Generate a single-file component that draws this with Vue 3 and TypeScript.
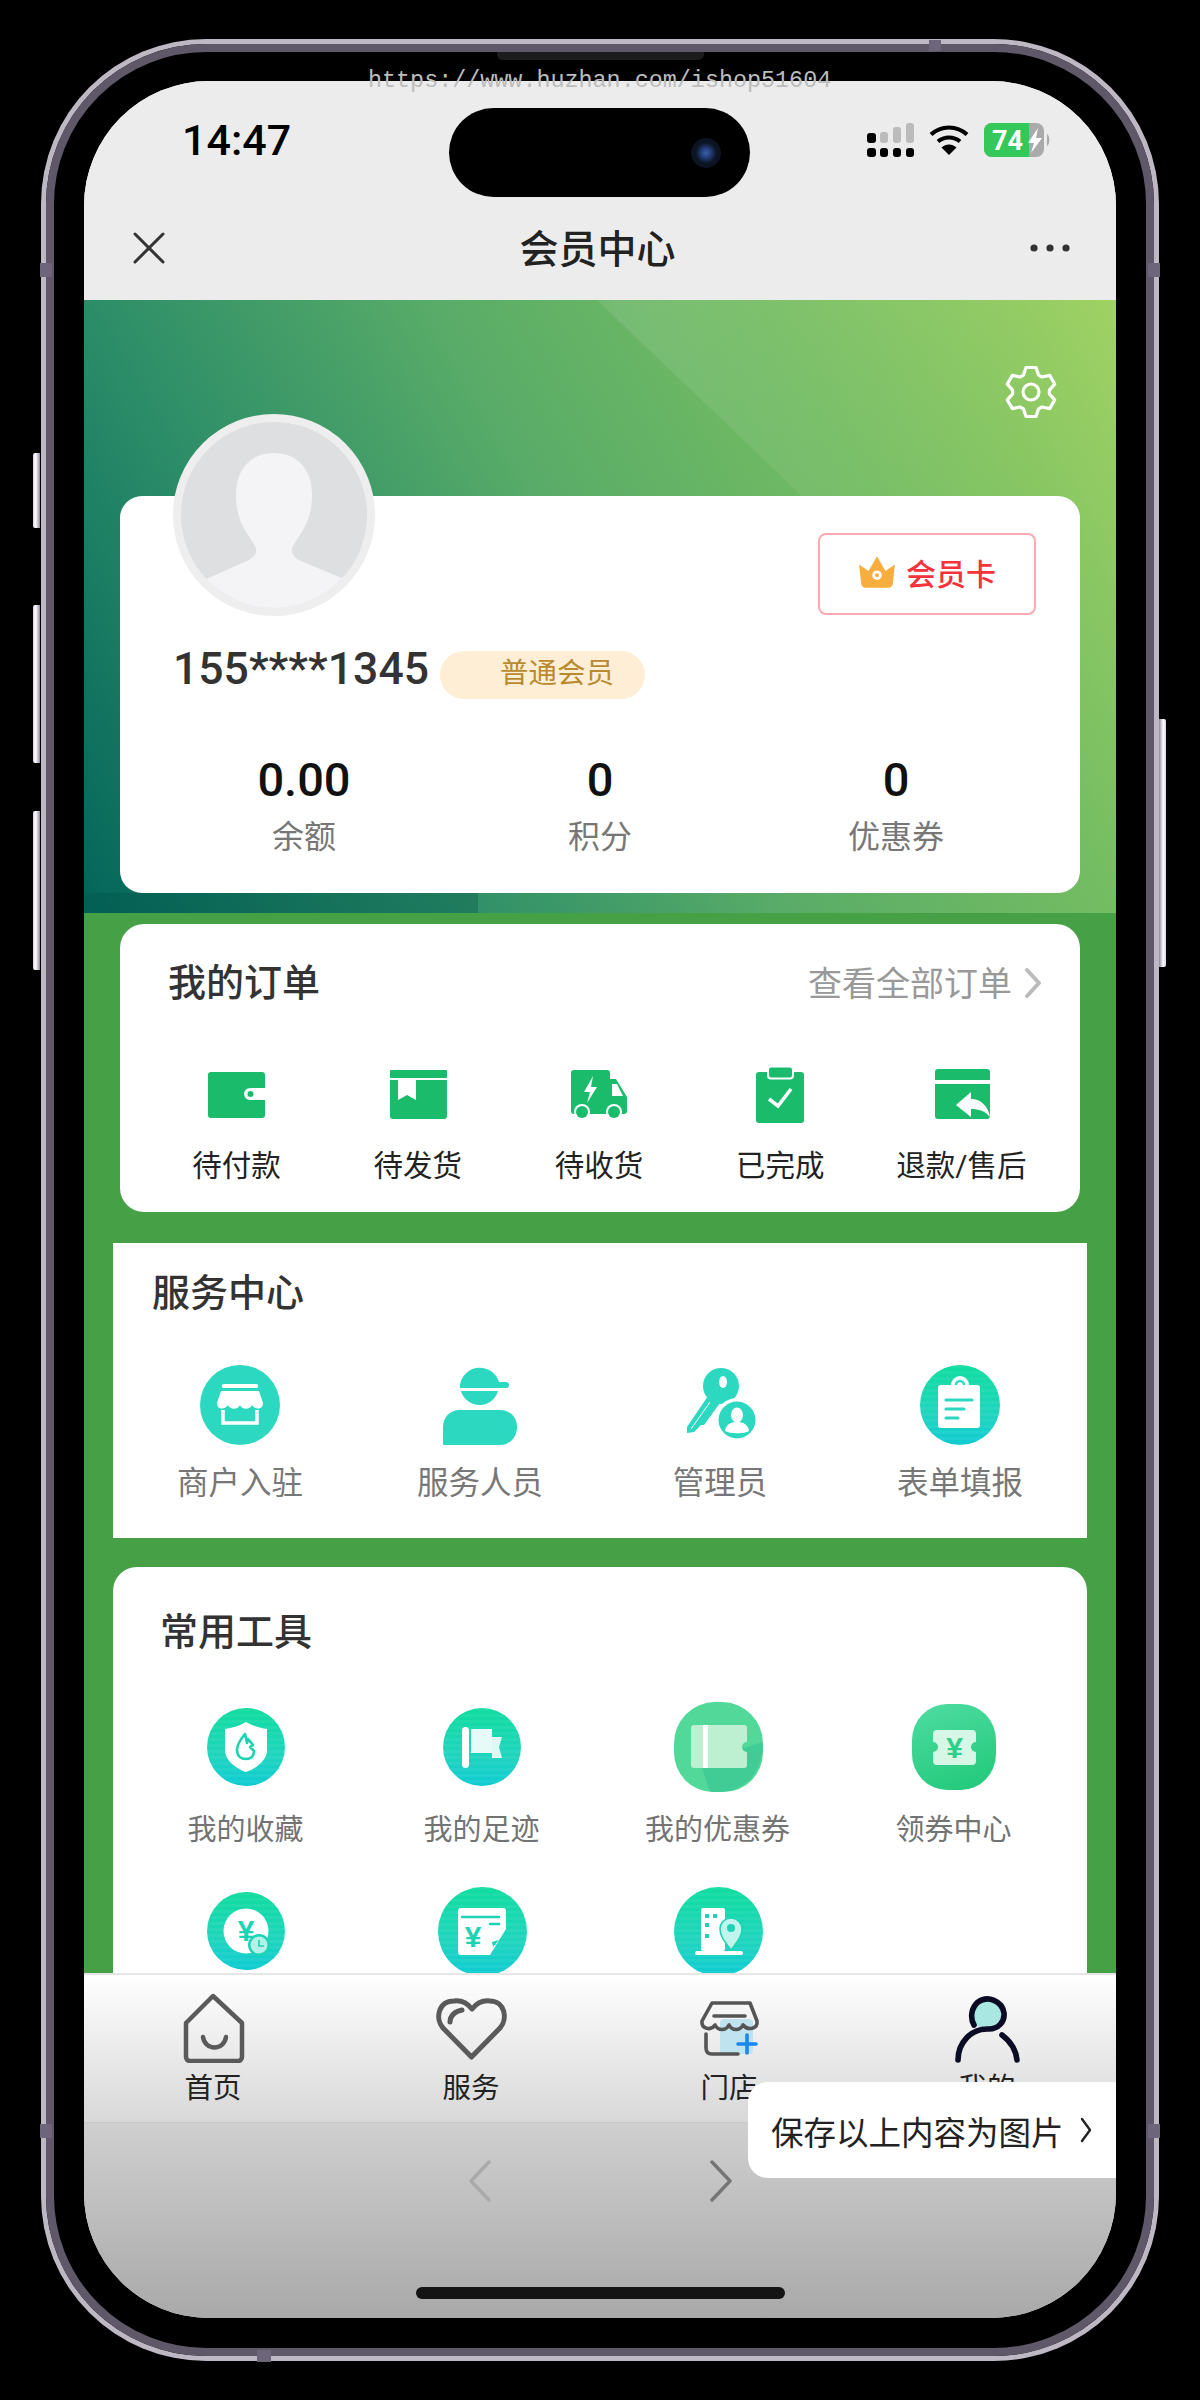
<template>
  <div class="page">
    <i class="side side-a"></i>
    <i class="side side-b"></i>
    <i class="side side-c"></i>
    <i class="side side-d"></i>
    <i class="seam seam-top"></i>
    <i class="seam seam-bottom"></i>
    <i class="seam seam-l1"></i>
    <i class="seam seam-r1"></i>
    <i class="seam seam-l2"></i>
    <i class="seam seam-r2"></i>

    <div class="phone">
      <i class="speaker"></i>
      <div class="screen">
        <header class="top">
          <div class="island"><i class="camera"></i></div>
          <div class="status">
            <span class="time">14:47</span>
            <div class="status-icons">
              <svg width="47" height="34" viewBox="0 0 47 34">
                <rect x="0" y="10" width="9" height="10" rx="3" fill="#000" />
                <rect x="13" y="9" width="8" height="11" rx="3" fill="#bbb" />
                <rect x="26" y="4" width="8" height="16" rx="3" fill="#bbb" />
                <rect x="39" y="0" width="8" height="20" rx="3" fill="#bbb" />
                <rect x="0" y="25" width="9" height="9" rx="3" fill="#000" />
                <rect x="13" y="25" width="8" height="9" rx="3" fill="#000" />
                <rect x="26" y="25" width="8" height="9" rx="3" fill="#000" />
                <rect x="39" y="25" width="8" height="9" rx="3" fill="#000" />
              </svg>
              <svg width="40" height="30" viewBox="0 0 40 30" fill="none" stroke="#000" stroke-width="4">
                <path d="M2 9.5C12 0 28 0 38 9.5" />
                <path d="M9 16.5C15 11 25 11 31 16.5" />
                <path d="M20 30L12.5 22.5C17 18.5 23 18.5 27.5 22.5Z" fill="#000" stroke="none" />
              </svg>
              <svg width="67" height="34" viewBox="0 0 67 34">
                <rect x="0" y="0" width="60" height="34" rx="8" fill="#aaa" />
                <path d="M8 0H45V34H8A8 8 0 0 1 0 26V8A8 8 0 0 1 8 0Z" fill="#34c759" />
                <path d="M63 11C66 12 66 22 63 23Z" fill="#aaa" />
                <text x="8" y="27" class="batt">74</text>
                <path d="M54 5L44 20H50L47 30L58 15H52Z" fill="#fff" />
              </svg>
            </div>
          </div>
          <nav class="navbar">
            <svg width="32" height="32" viewBox="0 0 32 32" stroke="#333" stroke-width="3" stroke-linecap="round">
              <path d="M2 2L30 30M30 2L2 30" />
            </svg>
            <span class="nav-title">会员中心</span>
            <svg width="40" height="8" viewBox="0 0 40 8" fill="#333">
              <circle cx="4" cy="4" r="3.6" /><circle cx="20" cy="4" r="3.6" /><circle cx="36" cy="4" r="3.6" />
            </svg>
          </nav>
        </header>

        <main class="main">
          <section class="hero">
            <svg class="gear" width="54" height="54" viewBox="0 0 54 54" fill="none" stroke="#fff" stroke-width="3.2" stroke-linejoin="round">
              <path :d="gearPath" />
              <circle cx="27" cy="27" r="8" />
            </svg>
            <div class="profile">
              <div class="profile-top">
                <div class="avatar">
                  <svg width="186" height="186" viewBox="0 0 186 186">
                    <path d="M55 72C55 45 72 31 93 31C114 31 131 45 131 72C131 98 122 108 113 122C108 130 112 135 120 139L163 157V190H25V157L66 139C74 135 78 130 73 122C64 108 55 98 55 72Z" fill="#f4f4f7" />
                  </svg>
                </div>
                <div class="vip-btn">
                  <svg width="38" height="32" viewBox="0 0 36 30">
                    <path d="M1 8L10 14L18 0L26 14L35 8L33 26C33 28 31 30 29 30H7C5 30 3 28 3 26Z" fill="#f8ae3e" />
                    <circle cx="18" cy="18" r="4.5" fill="#fff" />
                    <circle cx="18" cy="18" r="1.8" fill="#f8ae3e" />
                  </svg>
                  <span>会员卡</span>
                </div>
              </div>
              <div class="name-row">
                <span class="phone-no">155****1345</span>
                <span class="level">普通会员</span>
              </div>
              <div class="stats">
                <div v-for="s in stats" :key="s.label" class="stat">
                  <b>{{ s.value }}</b>
                  <span>{{ s.label }}</span>
                </div>
              </div>
            </div>
          </section>

          <section class="orders">
            <div class="orders-head">
              <h3>我的订单</h3>
              <div class="all">
                <span>查看全部订单</span>
                <svg width="18" height="32" viewBox="0 0 18 32" fill="none" stroke="#bbb" stroke-width="4" stroke-linecap="round" stroke-linejoin="round">
                  <path d="M3 3L15 16L3 29" />
                </svg>
              </div>
            </div>
            <div class="orders-grid">
              <div class="order">
                <svg width="60" height="60" viewBox="0 0 60 60" fill="#1abc6c">
                  <path d="M4 7H55A3 3 0 0 1 58 10V23H43A6 6 0 0 0 43 35H58V50A3 3 0 0 1 55 53H4A3 3 0 0 1 1 50V10A3 3 0 0 1 4 7Z" />
                  <circle cx="43.5" cy="29" r="3" />
                </svg>
                <span>待付款</span>
              </div>
              <div class="order">
                <svg width="60" height="60" viewBox="0 0 60 60" fill="#1abc6c">
                  <rect x="2" y="5" width="57" height="8" rx="1" />
                  <path d="M2 15H10V35L19 30L28 35V15H59V51A3 3 0 0 1 56 54H5A3 3 0 0 1 2 51Z" />
                </svg>
                <span>待发货</span>
              </div>
              <div class="order">
                <svg width="60" height="60" viewBox="0 0 60 60" fill="#1abc6c">
                  <path d="M5 5H38A3 3 0 0 1 41 8V14H47L58 32V46C58 48 57 49 55 49H5C3 49 2 48 2 46V8A3 3 0 0 1 5 5Z" />
                  <path d="M43 19H48L54 31H43Z" fill="#fff" />
                  <path d="M24 11L15 27H21L18 38L28 22H22Z" fill="#fff" />
                  <circle cx="13" cy="47" r="8" fill="#fff" /><circle cx="13" cy="47" r="6" />
                  <circle cx="45" cy="47" r="8" fill="#fff" /><circle cx="45" cy="47" r="6" />
                </svg>
                <span>待收货</span>
              </div>
              <div class="order">
                <svg width="60" height="60" viewBox="0 0 60 60" fill="#1abc6c">
                  <path d="M9 7H51A3 3 0 0 1 54 10V55A3 3 0 0 1 51 58H9A3 3 0 0 1 6 55V10A3 3 0 0 1 9 7Z" />
                  <rect x="18" y="1.5" width="25" height="12" rx="3" stroke="#fff" stroke-width="2" />
                  <path d="M19 34L28 41L41 24" fill="none" stroke="#fff" stroke-width="3.5" />
                </svg>
                <span>已完成</span>
              </div>
              <div class="order">
                <svg width="60" height="60" viewBox="0 0 60 60" fill="#1abc6c">
                  <path d="M7 4H56A3 3 0 0 1 59 7V15H4V7A3 3 0 0 1 7 4Z" />
                  <path d="M4 19H59V51A3 3 0 0 1 56 54H7A3 3 0 0 1 4 51Z" />
                  <path d="M25 40L40 27V34C50 34 57 41 59 52C54 46 48 44 40 44V52Z" fill="#fff" />
                </svg>
                <span>退款/售后</span>
              </div>
            </div>
          </section>

          <section class="service">
            <h3>服务中心</h3>
            <div class="service-grid">
              <div class="cell">
                <svg width="80" height="80" viewBox="0 0 80 80">
                  <circle cx="40" cy="40" r="40" fill="#2dd8c0" />
                  <rect x="22" y="19" width="36" height="4" rx="1.5" fill="#fff" />
                  <path d="M21 26H59L63 38C63 45 55 45 52 40C50 45 42 45 40 40C38 45 30 45 28 40C25 45 17 45 17 38Z" fill="#fff" />
                  <path d="M23 45V58H57V45" fill="none" stroke="#fff" stroke-width="3.5" />
                </svg>
                <span>商户入驻</span>
              </div>
              <div class="cell">
                <svg width="80" height="80" viewBox="0 0 80 80" fill="#2dd8c0">
                  <path d="M20 23V20A20 20 0 0 1 59 17H66A3 3 0 0 1 66 23Z" />
                  <path d="M21 26H58C56 34 48 40 40 40C31 40 23 34 21 26Z" />
                  <path d="M20 45H60C70 45 77 52 77 62C77 72 70 80 60 80H3V62C3 52 10 45 20 45Z" />
                </svg>
                <span>服务人员</span>
              </div>
              <div class="cell">
                <svg width="80" height="80" viewBox="0 0 80 80" fill="#2dd8c0">
                  <circle cx="41" cy="21" r="18" />
                  <path d="M28 31L7 62V68L14 67L21 60H24L40 38Z" />
                  <ellipse cx="43" cy="17" rx="4" ry="6" fill="#fff" />
                  <path d="M11 64L30 37" stroke="#fff" stroke-width="1" />
                  <circle cx="57" cy="55" r="22" fill="#fff" />
                  <circle cx="57" cy="55" r="18.5" />
                  <ellipse cx="57" cy="50" rx="6" ry="7.5" fill="#fff" />
                  <path d="M45 66C46 59 51 57 57 57C63 57 68 59 69 66C65 69 50 69 45 66Z" fill="#fff" />
                </svg>
                <span>管理员</span>
              </div>
              <div class="cell">
                <div class="disc grad d80">
                  <svg width="80" height="80" viewBox="0 0 80 80">
                    <path d="M21 20H31A9 9 0 0 1 49 20H57A3 3 0 0 1 60 23V60A3 3 0 0 1 57 63H21A3 3 0 0 1 18 60V23A3 3 0 0 1 21 20Z" fill="#fff" />
                    <path d="M36 20A4 4 0 0 1 44 20" fill="none" stroke="#2dd8c0" stroke-width="2.5" />
                    <path d="M26 35H52M26 44H44M26 53H38" stroke="#2dd8c0" stroke-width="3.2" stroke-linecap="round" />
                  </svg>
                </div>
                <span>表单填报</span>
              </div>
            </div>
          </section>

          <section class="tools">
            <h3>常用工具</h3>
            <div class="tools-grid">
              <div class="tool">
                <div class="slot">
                  <div class="disc grad d78">
                    <svg width="78" height="78" viewBox="0 0 78 78">
                      <path d="M39 14C32 18 25 20 18 21V42C18 53 30 61 39 64C48 61 60 53 60 42V21C53 20 46 18 39 14Z" fill="#fff" />
                      <path d="M38 26C33 32 30 37 30 42C30 48 34 51 39 51C44 51 47 48 47 43L43 39L46 37L41 31L40 35Z" fill="none" stroke="#18d4b0" stroke-width="2.6" stroke-linejoin="round" />
                    </svg>
                  </div>
                </div>
                <span>我的收藏</span>
              </div>
              <div class="tool">
                <div class="slot">
                  <div class="disc grad d78">
                    <svg width="78" height="78" viewBox="0 0 78 78" fill="#fff">
                      <rect x="19" y="19" width="7" height="41" rx="3.5" />
                      <rect x="28" y="21" width="21" height="24" fill="#e6fbf8" />
                      <path d="M49 29H59L56 39L59 50H49Z" fill="#dff8f5" />
                    </svg>
                  </div>
                </div>
                <span>我的足迹</span>
              </div>
              <div class="tool">
                <div class="slot">
                  <div class="squircle coupon">
                    <svg width="89" height="90" viewBox="0 0 89 90">
                      <path d="M89 40C89 70 72 90 44 90H36L26 60L73 45Z" fill="#3cc894" opacity=".7" />
                      <path d="M20 23H70A3 3 0 0 1 73 26V40A5 5 0 0 0 73 50V63A3 3 0 0 1 70 66H20A3 3 0 0 1 17 63V26A3 3 0 0 1 20 23Z" fill="#bdf0d0" />
                      <rect x="29" y="23" width="5" height="43" fill="#fff" />
                    </svg>
                  </div>
                </div>
                <span>我的优惠券</span>
              </div>
              <div class="tool">
                <div class="slot">
                  <div class="squircle ticket">
                    <svg width="84" height="86" viewBox="0 0 84 86">
                      <path d="M25 26H60A4 4 0 0 1 64 30V38A5 5 0 0 0 64 48V57A4 4 0 0 1 60 61H25A4 4 0 0 1 21 57V48A5 5 0 0 0 21 38V30A4 4 0 0 1 25 26Z" fill="#d6f6e6" />
                      <text x="42.5" y="54" class="yen" fill="#2ecf8a">¥</text>
                    </svg>
                  </div>
                </div>
                <span>领券中心</span>
              </div>
              <div class="tool">
                <div class="slot">
                  <div class="disc grad d78">
                    <svg width="78" height="78" viewBox="0 0 78 78">
                      <circle cx="39" cy="39" r="22.5" fill="#fff" />
                      <text x="39" y="49" class="yen" fill="#1cd4b4">¥</text>
                      <circle cx="52" cy="53" r="11" fill="#1cd4b4" />
                      <circle cx="52" cy="53" r="8.5" fill="#b4f1e8" />
                      <path d="M52 48V54H57" fill="none" stroke="#1cd4b4" stroke-width="1.6" />
                    </svg>
                  </div>
                </div>
                <span></span>
              </div>
              <div class="tool">
                <div class="slot">
                  <div class="disc grad d89">
                    <svg width="89" height="89" viewBox="0 0 89 89">
                      <path d="M23 21H65A3 3 0 0 1 68 24V42L52 68H23A3 3 0 0 1 20 65V24A3 3 0 0 1 23 21Z" fill="#fff" />
                      <path d="M24 30H61M52 37H61" stroke="#1cd4b4" stroke-width="2.4" stroke-linecap="round" />
                      <text x="35" y="60" class="yen" fill="#1cd4b4">¥</text>
                      <path d="M54 55L61 53L55 60Z" fill="#1cd4b4" />
                    </svg>
                  </div>
                </div>
                <span></span>
              </div>
              <div class="tool">
                <div class="slot">
                  <div class="disc grad d89">
                    <svg width="89" height="89" viewBox="0 0 89 89" fill="#fff">
                      <rect x="27" y="21" width="24" height="43" rx="2" />
                      <rect x="21" y="64" width="48" height="4" rx="2" />
                      <path d="M31 27H35V31H31ZM39 27H43V31H39ZM31 36H35V40H31ZM31 47H35V51H31Z" fill="#1cd4b4" />
                      <path d="M57 63C52 56 46 50 46 42A11 11 0 0 1 68 42C68 50 62 56 57 63Z" fill="#c0f4ec" stroke="#1cd4b4" stroke-width="1.5" />
                      <circle cx="57" cy="41" r="4" fill="#1cd4b4" />
                    </svg>
                  </div>
                </div>
                <span></span>
              </div>
            </div>
          </section>
        </main>

        <footer class="tabs">
          <div class="tab">
            <svg width="72" height="72" viewBox="0 0 72 72" fill="none" stroke="#5a5a5a" stroke-width="4.5" stroke-linejoin="round" stroke-linecap="round">
              <path d="M36 5L65 32V66A4 4 0 0 1 61 70H13A4 4 0 0 1 9 66V32Z" />
              <path d="M26 46C28 60 47 60 49 46" />
            </svg>
            <span>首页</span>
          </div>
          <div class="tab">
            <svg width="72" height="72" viewBox="0 0 72 72" fill="none" stroke="#5a5a5a" stroke-width="5" stroke-linejoin="round" stroke-linecap="round">
              <path d="M36.5 66L8 37C0 28 3 10 19 10C27 9 33 13 37 18C41 13 47 9 55 10C70 10 73 28 65 37Z" />
              <path d="M15 31C15 25 20 20 27 19" />
            </svg>
            <span>服务</span>
          </div>
          <div class="tab">
            <svg width="72" height="72" viewBox="0 0 72 72" fill="none" stroke="#555" stroke-width="3.6" stroke-linecap="round" stroke-linejoin="round">
              <rect x="27" y="28" width="33" height="35" rx="4" fill="#bfe4ef" stroke="none" />
              <path d="M19 12H57L64 30C65 38 55 40 50 34C47 40 39 40 36 34C33 40 25 40 22 34C18 40 8 38 9 30Z" />
              <path d="M21 25H52" />
              <path d="M13 43V57C13 61 15 63 19 63H45" />
              <path d="M54 44V62M45 53H63" stroke="#1a86f0" />
            </svg>
            <span>门店</span>
          </div>
          <div class="tab">
            <svg width="72" height="72" viewBox="0 0 72 72" fill="none" stroke="#0b0b26" stroke-width="5.6" stroke-linecap="round">
              <circle cx="37" cy="23" r="16" fill="#a9e7e3" stroke="none" />
              <path d="M23 34C19 27 20 17 27 11C37 4 51 10 53 22C54 31 47 38 38 38C20 37 7 52 7 69" />
              <path d="M51 44C59 50 65 59 66 69" />
            </svg>
            <span>我的</span>
          </div>
        </footer>

        <div class="chrome">
          <div class="arrows">
            <svg width="24" height="42" viewBox="0 0 24 42" fill="none" stroke="#aaa" stroke-width="3.4" stroke-linecap="round" stroke-linejoin="round">
              <path d="M21 2L3 21L21 40" />
            </svg>
            <svg width="24" height="42" viewBox="0 0 24 42" fill="none" stroke="#757575" stroke-width="3.4" stroke-linecap="round" stroke-linejoin="round">
              <path d="M3 2L21 21L3 40" />
            </svg>
          </div>
          <i class="home-bar"></i>
        </div>

        <div class="save-pop">
          <span>保存以上内容为图片</span>
          <svg width="12" height="26" viewBox="0 0 12 26" fill="none" stroke="#222" stroke-width="2.4" stroke-linecap="round" stroke-linejoin="round">
            <path d="M2 2L10 13L2 24" />
          </svg>
        </div>
      </div>
    </div>

    <div class="watermark">https://www.huzhan.com/ishop51604</div>
  </div>
</template>

<script setup lang="ts">
import { computed } from 'vue'

const stats = [
  { value: '0.00', label: '余额' },
  { value: '0', label: '积分' },
  { value: '0', label: '优惠券' },
]

// six tooth gear outline, easier to compute than to write by hand
const gearPath = computed(() => {
  const pts: string[] = []
  for (let i = 0; i < 6; i++) {
    const a = (i * Math.PI) / 3 - Math.PI / 2
    const steps: [number, number][] = [
      [18.5, -0.42],
      [25, -0.2],
      [25, 0.2],
      [18.5, 0.42],
    ]
    for (const [r, da] of steps) {
      pts.push(`${(27 + r * Math.cos(a + da)).toFixed(1)} ${(27 + r * Math.sin(a + da)).toFixed(1)}`)
    }
  }
  return 'M' + pts.join('L') + 'Z'
})
</script>

<style>
html,
body {
  background: #000;
}
</style>

<style scoped>
.page {
  position: relative;
  width: 1200px;
  height: 2400px;
  box-sizing: border-box;
  padding: 44px 46px 0;
  overflow: hidden;
  background: #000;
  font-family: 'Roboto', 'Noto Sans CJK SC', sans-serif;
}

i {
  display: block;
}

.phone {
  position: relative;
  box-sizing: border-box;
  height: 2312px;
  padding: 29px 30px 30px;
  border: 8px solid #5f5869;
  border-radius: 160px;
  box-shadow: 0 0 0 5px #bdb8c4;
}

.speaker {
  position: absolute;
  top: 0;
  left: 443px;
  width: 207px;
  height: 8px;
  border-radius: 0 0 6px 6px;
  background: #1c1c1c;
}

.side {
  position: absolute;
  width: 7px;
  border-radius: 2px 0 0 2px;
  background: linear-gradient(90deg, #d8d2e4, #fff 40%, #8d86a0);
}

.side-a {
  left: 33px;
  top: 453px;
  height: 75px;
}

.side-b {
  left: 33px;
  top: 605px;
  height: 158px;
}

.side-c {
  left: 33px;
  top: 811px;
  height: 159px;
}

.side-d {
  left: 1159px;
  top: 719px;
  height: 248px;
  transform: scaleX(-1);
}

.seam {
  position: absolute;
  z-index: 2;
  background: #6d6579;
}

.seam-top {
  left: 929px;
  top: 40px;
  width: 12px;
  height: 11px;
}

.seam-bottom {
  left: 257px;
  top: 2350px;
  width: 14px;
  height: 12px;
}

.seam-l1,
.seam-l2 {
  left: 40px;
  width: 12px;
  height: 14px;
}

.seam-r1,
.seam-r2 {
  left: 1148px;
  width: 12px;
  height: 14px;
}

.seam-l1,
.seam-r1 {
  top: 263px;
}

.seam-l2,
.seam-r2 {
  top: 2124px;
}

.screen {
  position: relative;
  display: flex;
  flex-direction: column;
  width: 1032px;
  height: 2237px;
  overflow: hidden;
  border-radius: 125px;
  background: #ececec;
}

.top {
  position: relative;
  flex: none;
  height: 219px;
  background: #ececec;
}

.island {
  position: absolute;
  top: 27px;
  left: 365px;
  width: 301px;
  height: 89px;
  border-radius: 45px;
  background: #000;
}

.camera {
  position: absolute;
  top: 30px;
  left: 242px;
  width: 30px;
  height: 30px;
  border-radius: 50%;
  background: radial-gradient(circle, #3a5fa8 0, #25407c 22%, #0d1526 48%, #0a0f1c 100%);
}

.status {
  display: flex;
  align-items: center;
  justify-content: space-between;
  height: 118px;
  padding: 0 65px 0 98px;
}

.time {
  font-size: 43px;
  font-weight: 500;
  color: #000;
}

.status-icons {
  display: flex;
  align-items: center;
  gap: 15px;
}

.batt {
  font: 700 27px 'Roboto', sans-serif;
  fill: #fff;
}

.navbar {
  display: flex;
  align-items: center;
  justify-content: space-between;
  height: 98px;
  padding: 0 46px 0 49px;
}

.nav-title {
  margin-bottom: 5px;
  font-size: 39px;
  font-weight: 500;
  color: #222;
}

.main {
  flex: 1;
  min-height: 0;
  overflow: hidden;
  background: #46a046;
}

.hero {
  position: relative;
  height: 613px;
  box-sizing: border-box;
  padding: 196px 36px 0;
  overflow: hidden;
  background: linear-gradient(60deg, #03655a 0, #2a8c68 25%, #58ab68 50%, #75bd62 75%, #a0d264 100%);
}

.hero::before {
  content: '';
  position: absolute;
  inset: 0;
  clip-path: polygon(513px 0, 100% 0, 100% 81%);
  background: linear-gradient(90deg, rgba(255, 255, 255, 0) 45%, rgba(255, 255, 255, 0.1) 52%, rgba(255, 255, 255, 0) 92%);
}

.hero::after {
  content: '';
  position: absolute;
  inset: 0;
  clip-path: polygon(0 96.7%, 394px 96.7%, 394px 100%, 0 100%);
  background: rgba(0, 80, 70, 0.3);
}

.gear {
  position: absolute;
  top: 65px;
  left: 920px;
}

.profile {
  position: relative;
  z-index: 1;
  display: flow-root;
  height: 397px;
  border-radius: 22px;
  background: #fff;
}

.profile-top {
  display: flex;
  align-items: flex-start;
  justify-content: space-between;
  height: 202px;
  margin-top: -82px;
  padding: 0 44px 0 53px;
}

.avatar {
  box-sizing: border-box;
  width: 202px;
  height: 202px;
  overflow: hidden;
  border: 8px solid #eeeeee;
  border-radius: 50%;
  background: #dedfe1;
}

.avatar svg {
  display: block;
}

.vip-btn {
  display: flex;
  align-items: center;
  justify-content: center;
  gap: 10px;
  box-sizing: border-box;
  width: 218px;
  height: 82px;
  margin-top: 119px;
  padding-bottom: 4px;
  border: 2px solid #ffaab0;
  border-radius: 8px;
  font-size: 30px;
  font-weight: 500;
  color: #f4333c;
}

.name-row {
  display: flex;
  align-items: flex-start;
  margin-top: 35px;
  padding-left: 53px;
}

.phone-no {
  margin-top: -6px;
  font-size: 44.5px;
  font-weight: 500;
  line-height: 48px;
  color: #333;
}

.level {
  box-sizing: border-box;
  width: 205px;
  height: 48px;
  margin-left: 11px;
  padding-left: 60px;
  border-radius: 24px;
  background: #fdeed5;
  font-size: 28.5px;
  line-height: 46px;
  color: #b98a2e;
  white-space: nowrap;
}

.stats {
  display: grid;
  grid-template-columns: repeat(3, 1fr);
  margin-top: 56px;
  padding: 0 36px;
}

.stat {
  display: flex;
  flex-direction: column;
  align-items: center;
}

.stat b {
  font-size: 47px;
  font-weight: 500;
  line-height: 50px;
  color: #111;
}

.stat span {
  margin-top: 12px;
  font-size: 32px;
  line-height: 40px;
  color: #777;
}

.orders {
  height: 288px;
  box-sizing: border-box;
  margin: 11px 36px 0;
  padding-top: 33px;
  border-radius: 24px;
  background: #fff;
}

h3 {
  margin: 0;
  font-size: 38px;
  font-weight: 500;
  line-height: 50px;
  color: #333;
}

.orders-head {
  display: flex;
  align-items: center;
  justify-content: space-between;
  padding: 0 38px 0 48px;
}

.orders-head h3 {
  margin-top: 1px;
}

.all {
  display: flex;
  align-items: center;
  gap: 12px;
  font-size: 34px;
  color: #999;
}

.all span {
  margin-bottom: 2px;
}

.orders-grid {
  display: grid;
  grid-template-columns: repeat(5, 1fr);
  margin-top: 57px;
  padding: 0 28px 0 26px;
}

.order {
  display: flex;
  flex-direction: column;
  align-items: center;
  gap: 21px;
  font-size: 29.5px;
  line-height: 40px;
  color: #222;
}

.service {
  height: 295px;
  box-sizing: border-box;
  margin: 31px 29px 0;
  padding: 25px 7px 0;
  background: #fff;
}

.service h3 {
  padding-left: 32px;
}

.service-grid {
  display: grid;
  grid-template-columns: repeat(4, 1fr);
  margin-top: 47px;
}

.cell {
  display: flex;
  flex-direction: column;
  align-items: center;
  gap: 19px;
  font-size: 31.5px;
  line-height: 40px;
  color: #777;
}

.cell svg,
.slot svg {
  display: block;
}

.disc {
  border-radius: 50%;
}

.grad {
  background:
    repeating-linear-gradient(180deg, rgba(255, 255, 255, 0.05) 0 3px, rgba(255, 255, 255, 0) 3px 6px),
    linear-gradient(180deg, #0fdc9e 0, #1fd5be 62%, #0dcbd3 100%);
}

.d78 {
  width: 78px;
  height: 78px;
}

.d80 {
  width: 80px;
  height: 80px;
}

.d89 {
  width: 89px;
  height: 89px;
}

.tools {
  box-sizing: border-box;
  height: 420px;
  margin: 29px 29px 0;
  padding: 40px 15px 0;
  border-radius: 24px 24px 0 0;
  background: #fff;
}

.tools h3 {
  padding-left: 32px;
}

.tools-grid {
  display: grid;
  grid-template-columns: repeat(4, 1fr);
  row-gap: 38px;
  margin-top: 45px;
}

.tool {
  display: flex;
  flex-direction: column;
  align-items: center;
  font-size: 29px;
  line-height: 36px;
  color: #737373;
}

.tool span {
  margin-left: -1px;
}

.slot {
  display: flex;
  align-items: center;
  justify-content: center;
  height: 90px;
  margin-bottom: 20px;
}

.squircle {
  overflow: hidden;
}

.coupon {
  width: 89px;
  height: 90px;
  border-radius: 46% 46% 44% 44%;
  background: #52d898;
}

.ticket {
  width: 84px;
  height: 86px;
  border-radius: 42%;
  background: linear-gradient(160deg, #4fdca2, #1fc878);
}

.yen {
  font: 700 30px 'Liberation Sans', sans-serif;
  text-anchor: middle;
}

.tabs {
  flex: none;
  display: grid;
  grid-template-columns: repeat(4, 1fr);
  height: 150px;
  box-sizing: border-box;
  padding-top: 16px;
  border-top: 2px solid #e6e6e6;
  border-bottom: 1px solid #c8c8c8;
  background: linear-gradient(180deg, #fff 0, #f1f1f1 35%, #d8d8d8 100%);
}

.tab {
  display: flex;
  flex-direction: column;
  align-items: center;
  font-size: 28.5px;
  line-height: 34px;
  color: #222;
}

.tab span {
  margin-top: 9px;
}

.chrome {
  flex: none;
  display: flex;
  flex-direction: column;
  align-items: center;
  height: 195px;
  box-sizing: border-box;
  padding-top: 37px;
  background: linear-gradient(180deg, #cfcfcf 0, #a9a9a9 100%);
}

.arrows {
  display: flex;
  gap: 217px;
}

.home-bar {
  width: 369px;
  height: 12px;
  margin-top: 85px;
  border-radius: 6px;
  background: #141414;
}

.save-pop {
  position: absolute;
  right: 0;
  bottom: 140px;
  display: flex;
  align-items: center;
  gap: 16px;
  box-sizing: border-box;
  width: 368px;
  height: 96px;
  padding-left: 23px;
  border-radius: 20px 0 0 20px;
  background: #fff;
  font-size: 32.5px;
  color: #222;
}

.watermark {
  position: absolute;
  top: 67px;
  left: 368px;
  font-family: 'Liberation Mono', 'DejaVu Sans Mono', monospace;
  font-size: 23.4px;
  line-height: 28px;
  color: #bdbdbd;
  white-space: nowrap;
}
</style>
